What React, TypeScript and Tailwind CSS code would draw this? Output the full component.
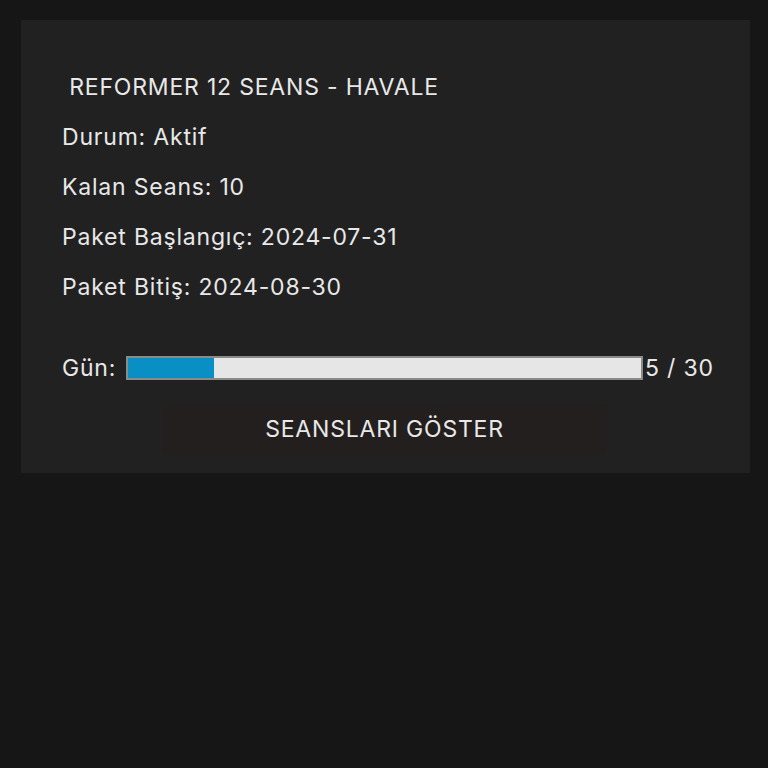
import React from 'react';

const lines = ['Durum: Aktif', 'Kalan Seans: 10', 'Paket Başlangıç: 2024-07-31', 'Paket Bitiş: 2024-08-30'];

export default function App() {
  const used = 5;
  const total = 30;
  return (
    <div className="min-h-[768px] w-full bg-[#161616] pt-[20px] font-['Inter','Noto_Sans',sans-serif] text-[23px] tracking-[0.8px] text-[#e8e8e8]">
      <div className="ml-[21px] flex h-[453px] w-[729px] flex-col bg-[#212121] pl-[41px] pt-[42px]">
        <div className="leading-[50px]">&nbsp;REFORMER 12 SEANS - HAVALE</div>
        {lines.map((l) => (
          <div key={l} className="leading-[50px]">
            {l}
          </div>
        ))}

        <div className="mt-[44px] flex h-[24px] items-center">
          <span className="w-[64px]">Gün:</span>
          <div className="h-[24px] w-[517px] border-2 border-[#8a8a8a] bg-[#e6e6e6]">
            <div className="h-full bg-[#0a8fc4]" style={{ width: `${(used / total) * 100}%` }} />
          </div>
          <span className="ml-[2px]">
            {used} / {total}
          </span>
        </div>

        <button className="ml-[100px] mt-[24px] h-[51px] w-[445px] bg-[#231f1e] tracking-[0.8px] text-[#e8e8e8]">
          SEANSLARI GÖSTER
        </button>
      </div>
    </div>
  );
}
